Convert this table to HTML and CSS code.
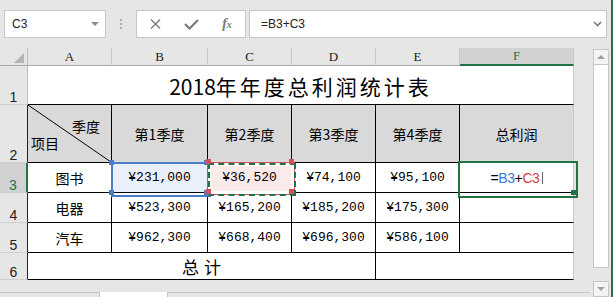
FILE: index.html
```html
<!DOCTYPE html>
<html lang="zh-CN">
<head>
<meta charset="utf-8">
<title>2018年年度总利润统计表</title>
<link rel="stylesheet" href="styles.css">
</head>
<body>
<div class="app">
  <div class="toolbar">
    <div class="namebox"><span>C3</span><span class="tri"></span></div>
    <div class="grip"><i></i><i></i><i></i></div>
    <div class="fxbtns">
      <div class="slot">
        <svg width="11" height="10" viewBox="0 0 11 10"><path d="M1 0.5 L10 9.5 M10 0.5 L1 9.5" stroke="#7a7a7a" stroke-width="1.4" fill="none"/></svg>
      </div>
      <div class="slot">
        <svg width="15" height="11" viewBox="0 0 15 11"><path d="M1 5 L5.5 9.5 L14 1" stroke="#7a7a7a" stroke-width="2.2" fill="none"/></svg>
      </div>
      <div class="slot"><span class="fx">f<span class="fxx">x</span></span></div>
    </div>
    <div class="formula"><span>=B3+C3</span>
      <svg width="9" height="6" viewBox="0 0 9 6"><path d="M1 1 L4.5 4.5 L8 1" stroke="#7a7a7a" stroke-width="1.6" fill="none"/></svg>
    </div>
  </div>
  <div class="main">
    <div class="left">
      <div class="grid">
        <div class="corner"><span class="corner-tri"></span></div>
        <div class="ch">A</div>
        <div class="ch">B</div>
        <div class="ch">C</div>
        <div class="ch">D</div>
        <div class="ch">E</div>
        <div class="ch sel">F</div>

        <div class="rh r1">1</div>
        <div class="title"><span class="yr">2018</span><span class="tt">年年度总利润统计表</span></div>

        <div class="rh">2</div>
        <div class="c hd diag">
          <svg class="diag-line" viewBox="0 0 100 100" preserveAspectRatio="none"><line x1="0" y1="0" x2="100" y2="100" stroke="#000" stroke-width="1" vector-effect="non-scaling-stroke"/></svg>
          <span class="d-top">季度</span>
          <span class="d-bot">项目</span>
        </div>
        <div class="c hd">第1季度</div>
        <div class="c hd">第2季度</div>
        <div class="c hd">第3季度</div>
        <div class="c hd">第4季度</div>
        <div class="c hd last">总利润</div>

        <div class="rh sel">3</div>
        <div class="c cj">图书</div>
        <div class="c num refb"><span class="h h-tl"></span><span class="h h-tr"></span><span class="h h-bl"></span><span class="h h-br"></span>¥231,000</div>
        <div class="c num refc"><span class="h h-tl"></span><span class="h h-tr"></span><span class="h h-bl"></span><span class="h h-br"></span>¥36,520</div>
        <div class="c num">¥74,100</div>
        <div class="c num">¥95,100</div>
        <div class="c last active"><span class="edit">=<span class="rb">B3</span>+<span class="rc">C3</span><span class="caret"></span></span><span class="fill"></span></div>

        <div class="rh">4</div>
        <div class="c cj">电器</div>
        <div class="c num">¥523,300</div>
        <div class="c num">¥165,200</div>
        <div class="c num">¥185,200</div>
        <div class="c num">¥175,300</div>
        <div class="c last"></div>

        <div class="rh">5</div>
        <div class="c cj">汽车</div>
        <div class="c num">¥962,300</div>
        <div class="c num">¥668,400</div>
        <div class="c num">¥696,300</div>
        <div class="c num">¥586,100</div>
        <div class="c last"></div>

        <div class="rh">6</div>
        <div class="c total">总计</div>
        <div class="c last blank"></div>
      </div>
      <div class="filler"></div>
      <div class="tabs"><div class="tab t1"></div><div class="tab t2"></div><div class="tab t3"></div></div>
    </div>
    <div class="scol">
      <div class="vscroll">
        <div class="sb-btn sb-up"><span class="up-tri"></span></div>
        <div class="sb-track"><div class="sb-thumb"></div></div>
        <div class="sb-btn sb-down"><span class="down-tri"></span></div>
      </div>
    </div>
  </div>
</div>
</body>
</html>
```

FILE: styles.css
```css
* { box-sizing: border-box; margin: 0; padding: 0; }
html, body { width: 613px; height: 297px; overflow: hidden; }
body {
  background: #e6e6e6;
  font-family: "Liberation Sans", Arial, sans-serif;
  color: #000;
}
.app {
  width: 613px;
  height: 297px;
  border-right: 2px solid #217346;
  display: flex;
  flex-direction: column;
}

/* ---------- formula toolbar ---------- */
.toolbar {
  height: 48px;
  flex: none;
  display: flex;
  align-items: flex-start;
  padding: 10px 0 0 4px;
}
.namebox {
  width: 102px;
  height: 28px;
  background: #fff;
  border: 1px solid #c6c6c6;
  display: flex;
  align-items: center;
  justify-content: space-between;
  padding: 0 6px 0 7px;
  font-size: 12px;
  color: #222;
}
.tri {
  width: 0;
  height: 0;
  border-left: 4px solid transparent;
  border-right: 4px solid transparent;
  border-top: 4px solid #8a8a8a;
}
.grip {
  width: 30px;
  height: 28px;
  display: flex;
  flex-direction: column;
  align-items: center;
  justify-content: center;
  gap: 2px;
}
.grip i {
  display: block;
  width: 2px;
  height: 2px;
  background: #a8a8a8;
}
.fxbtns {
  width: 110px;
  height: 28px;
  background: #fff;
  border: 1px solid #c6c6c6;
  display: flex;
}
.slot {
  width: 36px;
  height: 26px;
  display: flex;
  align-items: center;
  justify-content: center;
}
.fx {
  font-family: "Liberation Serif", serif;
  font-style: italic;
  font-weight: bold;
  font-size: 14px;
  color: #7a7a7a;
  line-height: 1;
}
.fxx { font-size: 10px; }
.formula {
  margin-left: 3px;
  width: 358px;
  height: 28px;
  background: #fff;
  border: 1px solid #c6c6c6;
  display: flex;
  align-items: center;
  justify-content: space-between;
  padding: 0 4px 0 11px;
  font-size: 12px;
  color: #222;
}

/* ---------- sheet ---------- */
.main {
  flex: 1;
  display: flex;
}
.left {
  width: 590px;
  display: flex;
  flex-direction: column;
}
.grid {
  display: grid;
  width: 574px;
  grid-template-columns: 28px 84px 96px 84px 84px 84px 114px;
  grid-template-rows: 18px 39px 58px 30px 30px 30px 27px;
}
.filler { flex: 1; }

.corner {
  background: #e6e6e6;
  border-right: 1px solid #bdbdbd;
  border-bottom: 1px solid #ababab;
  display: flex;
  justify-content: flex-end;
  align-items: flex-end;
  padding: 0 3px 2px 0;
}
.corner-tri {
  width: 10px;
  height: 10px;
  background: #b4b4b4;
  clip-path: polygon(100% 0, 100% 100%, 0 100%);
}
.ch {
  background: #e6e6e6;
  border-right: 1px solid #c8c8c8;
  border-bottom: 1px solid #ababab;
  display: flex;
  align-items: center;
  justify-content: center;
  font-family: "Liberation Serif", serif;
  font-size: 13px;
  color: #222;
}
.ch.sel {
  background: #d2d2d2;
  color: #217346;
  border-bottom: 2px solid #217346;
}
.rh {
  background: #e6e6e6;
  border-right: 1px solid #222;
  border-bottom: 1px solid #cfcfcf;
  display: flex;
  align-items: flex-end;
  justify-content: center;
  font-size: 14px;
  line-height: 14px;
  color: #222;
}
.rh.r1 { border-right-color: #bdbdbd; }
.rh.sel {
  background: #d2d2d2;
  color: #217346;
  border-right: 2px solid #217346;
}

.title {
  grid-column: 2 / 8;
  background: #fff;
  border-bottom: 1px solid #000;
  border-right: 1px solid #c8c8c8;
  display: flex;
  align-items: flex-end;
  justify-content: center;
  padding-bottom: 6px;
  font-family: "Noto Sans CJK SC", "Noto Sans", sans-serif;
  font-size: 21px;
  line-height: 24px;
}
.tt { letter-spacing: 3px; }

.c {
  background: #fff;
  border-right: 1px solid #000;
  border-bottom: 1px solid #000;
  display: flex;
  align-items: center;
  justify-content: center;
  font-family: "Noto Sans CJK SC", sans-serif;
  font-size: 14px;
}
.c.last { border-right-color: #c8c8c8; }
.hd { background: #d9d9d9; }
.num {
  font-family: "Liberation Mono", monospace;
  font-size: 13px;
}

.diag {
  position: relative;
  flex-direction: column;
  align-items: stretch;
  justify-content: flex-start;
  padding: 13px 11px 0 3px;
  gap: 1px;
  line-height: 16px;
}
.diag-line {
  position: absolute;
  left: 0;
  top: 0;
  width: 100%;
  height: 100%;
}
.d-top { align-self: flex-end; }
.d-bot { align-self: flex-start; }

.total {
  grid-column: 2 / 6;
  font-size: 17px;
  letter-spacing: 5px;
  padding-left: 5px;
}
.blank { grid-column: 6 / 8; }

/* reference highlights */
.refb, .refc, .active { position: relative; }
.refb { background: #e9f0fb; }
.refb::before {
  content: "";
  position: absolute;
  left: -1px;
  top: -1px;
  width: 96px;
  height: 31px;
  border: 2px solid #4a7cc9;
}
.refc { background: #fbeaea; }
.refc::before {
  content: "";
  position: absolute;
  left: -1px;
  top: -1px;
  width: 86px;
  height: 31px;
  border: 1px solid #d2505c;
  box-shadow: inset 0 0 0 3px #fff;
}
.refc::after {
  content: "";
  position: absolute;
  left: 0;
  top: 0;
  width: 84px;
  height: 29px;
  border: 2px dashed #217346;
}
.h {
  position: absolute;
  width: 5px;
  height: 5px;
  z-index: 2;
}
.refb .h { background: #4a7cc9; }
.refc .h { background: #d2505c; }
.refb .h-tl, .refb .h-bl { left: -3px; }
.refb .h-tr, .refb .h-br { left: 92px; }
.refb .h-tl, .refb .h-tr { top: -3px; }
.refb .h-bl, .refb .h-br { top: 27px; }
.refc .h-tl, .refc .h-bl { left: -2px; }
.refc .h-tr, .refc .h-br { left: 81px; }
.refc .h-tl, .refc .h-tr { top: -4px; }
.refc .h-bl, .refc .h-br { top: 26px; }

.active::before {
  content: "";
  position: absolute;
  left: -2px;
  top: -2px;
  width: 116px;
  height: 33px;
  border: 2px solid #217346;
}
.fill {
  position: absolute;
  left: 111px;
  top: 27px;
  width: 5px;
  height: 5px;
  background: #217346;
  z-index: 2;
}
.edit {
  font-family: "Liberation Sans", Arial, sans-serif;
  font-size: 14px;
  letter-spacing: -0.4px;
  display: flex;
  align-items: center;
}
.rb { color: #3b78d4; }
.rc { color: #d2404e; }
.caret {
  display: inline-block;
  width: 1px;
  height: 12px;
  margin-left: 2px;
  background: #666;
}

/* sheet tabs */
.tabs {
  height: 5px;
  flex: none;
  display: flex;
}
.tab { height: 5px; }
.t1 {
  width: 100px;
  border-top: 1px solid #c6c6c6;
  border-right: 1px solid #c6c6c6;
}
.t2 { width: 67px; background: #fff; }
.t3 {
  flex: 1;
  border-top: 1px solid #c6c6c6;
  border-left: 1px solid #c6c6c6;
}

/* vertical scrollbar */
.scol {
  flex: 1;
  padding: 1px 0 0 3px;
}
.vscroll {
  width: 16px;
  height: 100%;
  display: flex;
  flex-direction: column;
}
.sb-btn {
  height: 16px;
  flex: none;
  border: 1px solid #c6c6c6;
  background: #f4f4f4;
  display: flex;
  align-items: center;
  justify-content: center;
}
.up-tri {
  width: 0;
  height: 0;
  border-left: 4px solid transparent;
  border-right: 4px solid transparent;
  border-bottom: 4px solid #a0a0a0;
}
.down-tri {
  width: 0;
  height: 0;
  border-left: 4px solid transparent;
  border-right: 4px solid transparent;
  border-top: 4px solid #a0a0a0;
}
.sb-track {
  flex: 1;
  padding-bottom: 13px;
}
.sb-thumb {
  height: 203px;
  background: #fff;
  border: 1px solid #c6c6c6;
  border-top: none;
}
```
